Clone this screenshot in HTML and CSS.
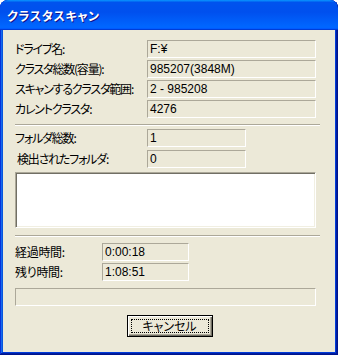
FILE: index.html
```html
<!DOCTYPE html>
<html lang="ja">
<head>
<meta charset="utf-8">
<title>クラスタスキャン</title>
<link rel="stylesheet" href="styles.css">
</head>
<body>
<div class="window">
  <div class="titlebar"><span class="title">クラスタスキャン</span></div>
  <div class="client">
    <div class="group info">
      <div class="row"><span class="label">ドライブ名:</span><span class="field wide">F:¥</span></div>
      <div class="row"><span class="label">クラスタ総数(容量):</span><span class="field wide">985207(3848M)</span></div>
      <div class="row"><span class="label">スキャンするクラスタ範囲:</span><span class="field wide">2 - 985208</span></div>
      <div class="row"><span class="label">カレントクラスタ:</span><span class="field wide">4276</span></div>
    </div>
    <div class="sep"></div>
    <div class="group folders">
      <div class="row"><span class="label">フォルダ総数:</span><span class="field mid">1</span></div>
      <div class="row"><span class="label indent">検出されたフォルダ:</span><span class="field mid">0</span></div>
    </div>
    <div class="listbox"></div>
    <div class="sep sep2"></div>
    <div class="group times">
      <div class="row"><span class="label short kanji">経過時間:</span><span class="field narrow">0:00:18</span></div>
      <div class="row"><span class="label short kanji">残り時間:</span><span class="field narrow">1:08:51</span></div>
    </div>
    <div class="progress"></div>
    <div class="actions">
      <button class="btn" type="button"><span class="focus">キャンセル</span></button>
    </div>
  </div>
</div>
</body>
</html>
```

FILE: styles.css
```css
html, body {
  margin: 0;
  padding: 0;
  background: #ffffff;
}

.window {
  width: 338px;
  height: 355px;
  box-sizing: border-box;
  background: #0055e5;
  border-radius: 8px 8px 0 0;
  box-shadow: inset -1px -1px #00138c, inset 1px 1px #0831d9,
              inset -2px -2px #001ea0, inset 2px 2px #166aee,
              inset -3px -3px #003bda, inset 3px 3px #0855dd;
  display: flex;
  flex-direction: column;
  overflow: hidden;
}

.titlebar {
  height: 30px;
  flex: none;
  box-sizing: border-box;
  border-radius: 8px 8px 0 0;
  background: linear-gradient(180deg, #0997ff, #0053ee 8%, #0050ee 40%, #0066ff 88%, #0066ff 93%, #005bff 95%, #003dd7 96%, #003dd7);
  display: flex;
  align-items: center;
  padding: 0 0 0 7px;
}

.title {
  font-family: "Noto Sans CJK JP", sans-serif;
  font-feature-settings: "palt";
  font-weight: bold;
  font-size: 12px;
  letter-spacing: 0.7px;
  color: #ffffff;
  text-shadow: 1px 1px #0f1089;
  line-height: 14px;
  margin-top: 1px;
}

.client {
  flex: 1;
  margin: 0 3px 3px;
  background: #ece9d8;
  padding: 10px 0 0 12px;
  display: flex;
  flex-direction: column;
  font-family: "Noto Sans CJK JP", sans-serif;
  font-size: 12px;
  color: #000000;
}

.group {
  display: flex;
  flex-direction: column;
  gap: 2px;
}

.folders {
  gap: 3px;
  margin-top: 3px;
}

.times {
  margin-top: 6px;
}

.row {
  display: flex;
  align-items: center;
  height: 18px;
}

.label {
  width: 132px;
  flex: none;
  font-feature-settings: "palt";
  letter-spacing: -1.2px;
  line-height: 18px;
  white-space: nowrap;
}

.label.kanji {
  letter-spacing: -0.3px;
}

.label.indent {
  padding-left: 2px;
  box-sizing: border-box;
}

.label.short {
  width: 87px;
}

.field {
  box-sizing: border-box;
  height: 18px;
  border-top: 1px solid #aca899;
  border-left: 1px solid #aca899;
  border-bottom: 1px solid #ffffff;
  border-right: 1px solid #ffffff;
  padding: 0 0 0 2px;
  font-family: "Liberation Sans", "Noto Sans CJK JP", sans-serif;
  font-size: 12px;
  line-height: 16px;
  white-space: nowrap;
}

.field.wide { width: 169px; }
.field.mid { width: 99px; }
.field.narrow { width: 87px; }

.sep {
  width: 305px;
  height: 0;
  border-top: 1px solid #aca899;
  border-bottom: 1px solid #ffffff;
  margin-top: 6px;
}

.sep2 {
  margin-top: 7px;
}

.listbox {
  width: 301px;
  height: 56px;
  box-sizing: border-box;
  margin-top: 4px;
  background: #ffffff;
  border-top: 1px solid #aca899;
  border-left: 1px solid #aca899;
  border-bottom: 1px solid #ffffff;
  border-right: 1px solid #ffffff;
  box-shadow: inset 1px 1px #716f64, inset -1px -1px #f1efe2;
}

.progress {
  width: 301px;
  height: 18px;
  box-sizing: border-box;
  margin-top: 7px;
  border-top: 1px solid #aca899;
  border-left: 1px solid #aca899;
  border-bottom: 1px solid #ffffff;
  border-right: 1px solid #ffffff;
}

.actions {
  display: flex;
  justify-content: center;
  padding-right: 12px;
  margin-top: 9px;
}

.btn {
  width: 86px;
  height: 22px;
  box-sizing: border-box;
  margin: 0 0 0 1px;
  padding: 3px;
  background: #ece9d8;
  border: 1px solid #000000;
  box-shadow: inset 1px 1px #ffffff, inset -1px -1px #716f64, inset -2px -2px #aca899;
  font-family: "Noto Sans CJK JP", sans-serif;
  font-size: 12px;
  color: #000000;
  display: flex;
}

.focus {
  flex: 1;
  border: 1px dotted #000000;
  line-height: 12px;
  font-feature-settings: "palt";
  display: flex;
  align-items: center;
  justify-content: center;
}
```
